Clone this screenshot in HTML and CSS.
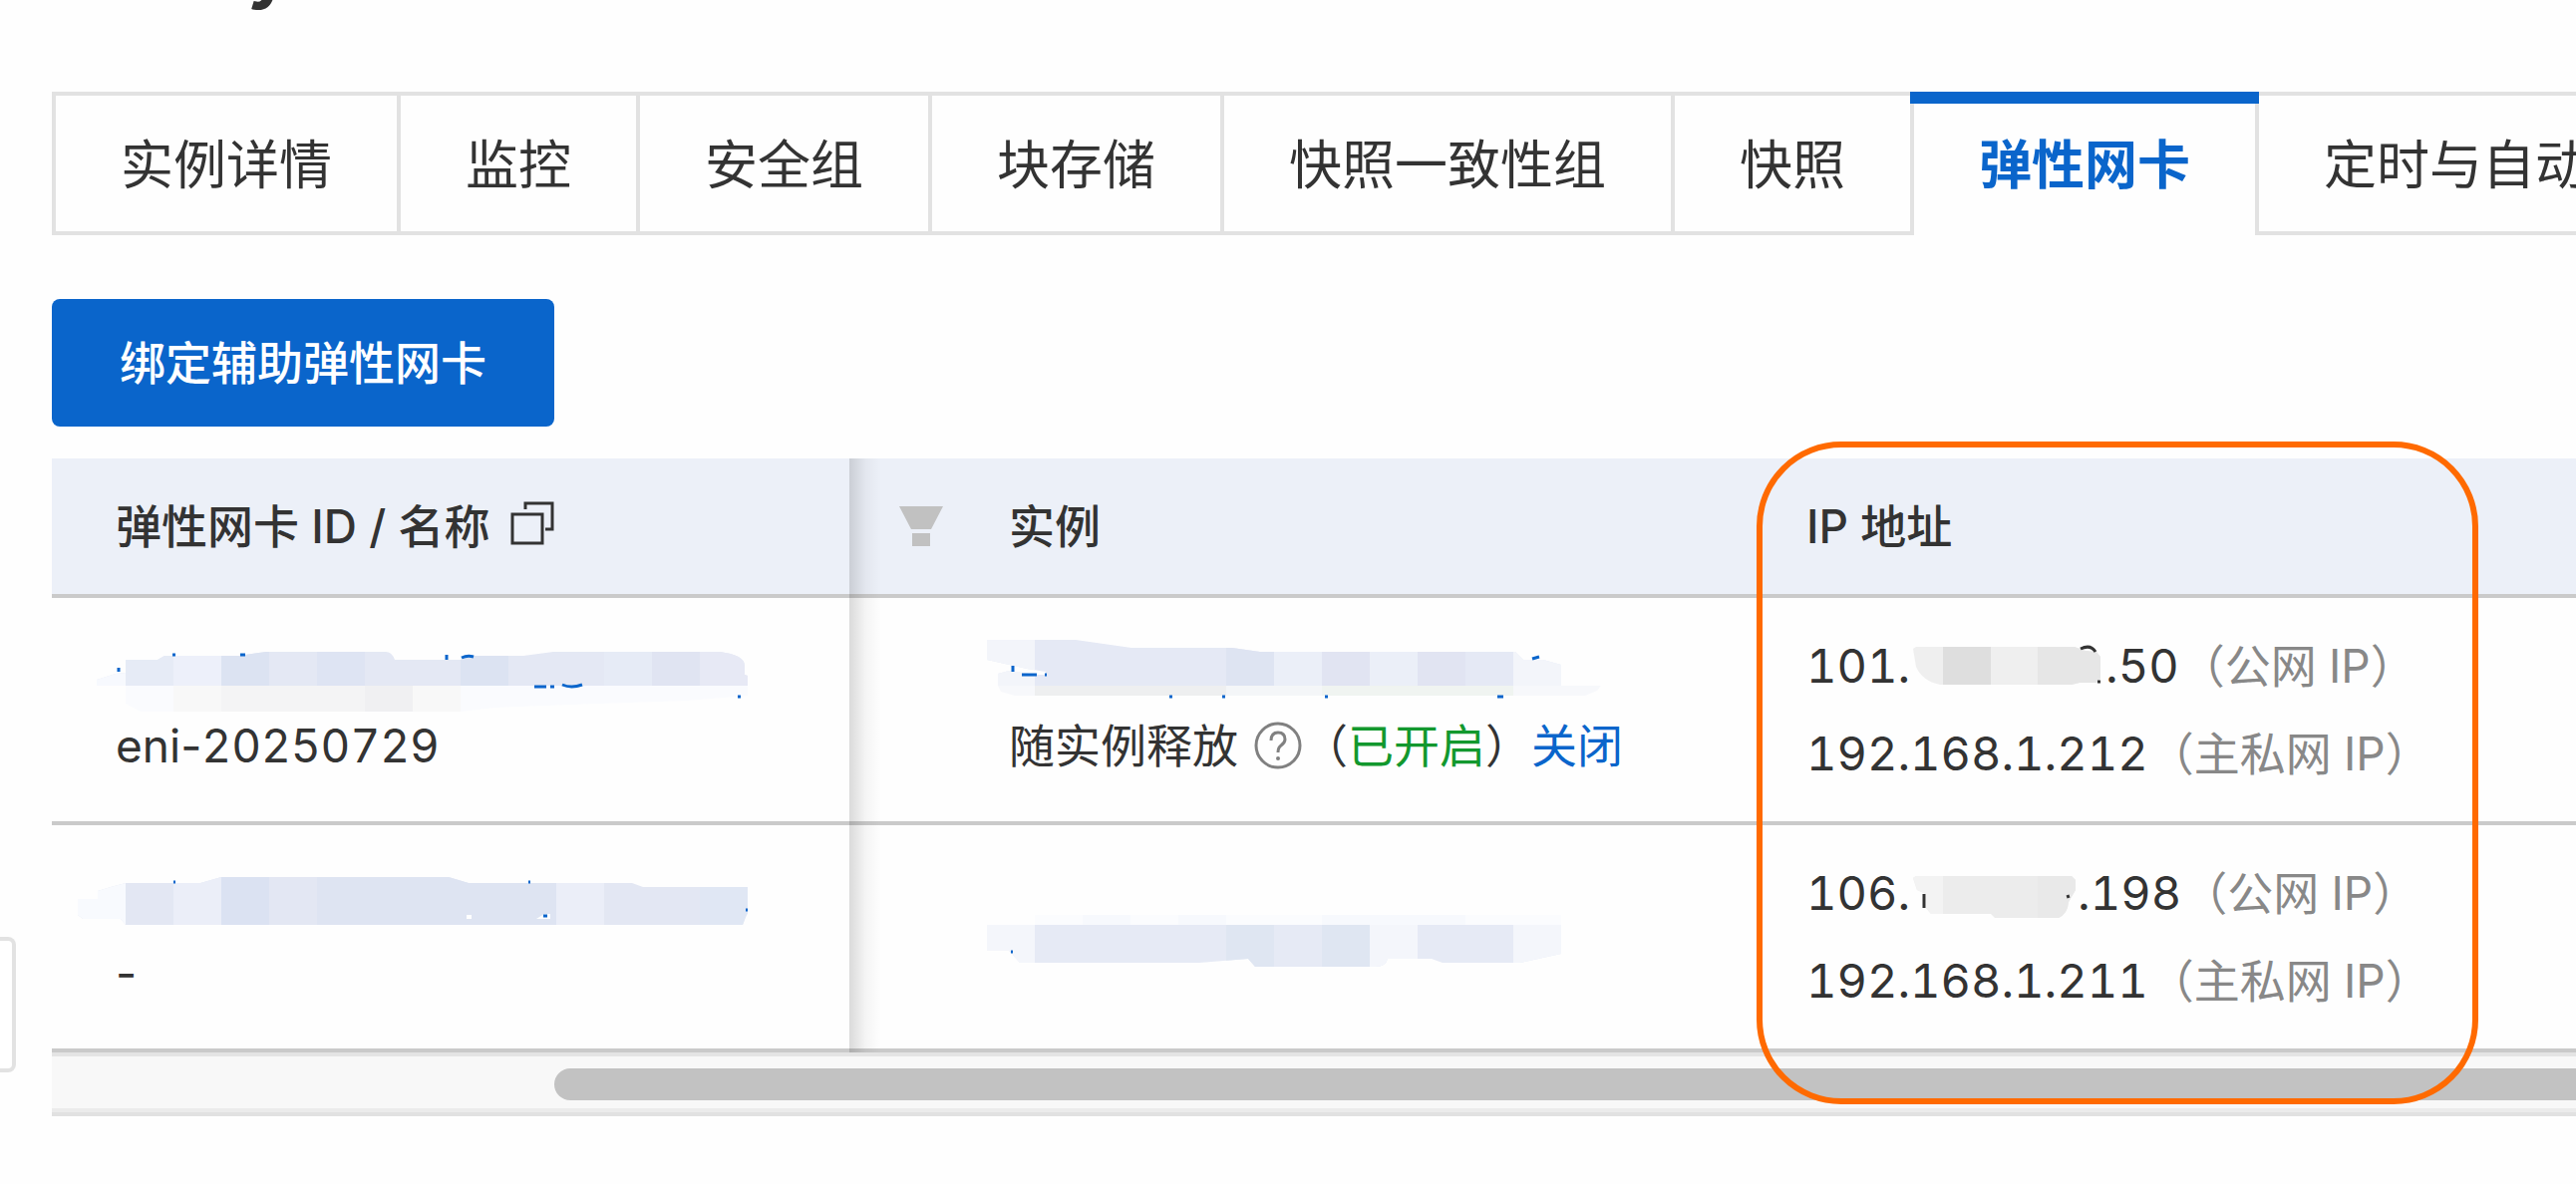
FILE: index.html
```html
<!DOCTYPE html>
<html lang="zh-CN">
<head>
  <meta charset="UTF-8">
  <title>弹性网卡</title>
  <link rel="stylesheet" href="styles.css">
</head>
<body>
  <button class="side-handle" aria-label="展开"></button>

  <header class="page-title">
    <h1>y</h1>
  </header>

  <nav class="tabs" role="tablist">
    <button class="tab" role="tab">实例详情</button>
    <button class="tab" role="tab">监控</button>
    <button class="tab" role="tab">安全组</button>
    <button class="tab" role="tab">块存储</button>
    <button class="tab" role="tab">快照一致性组</button>
    <button class="tab" role="tab">快照</button>
    <button class="tab active" role="tab" aria-selected="true">弹性网卡</button>
    <button class="tab" role="tab">定时与自动</button>
  </nav>

  <main class="content">
    <button class="btn-primary">绑定辅助弹性网卡</button>

    <div class="table-wrap">
      <table class="eni-table">
        <colgroup>
          <col class="col-id">
          <col class="col-filter">
          <col class="col-instance">
          <col class="col-ip">
        </colgroup>
        <thead>
          <tr>
            <th class="fixed">
              <div class="th-inner">
                <span>弹性网卡 ID / 名称</span>
                <svg class="icon-copy" viewBox="0 0 44 44" aria-hidden="true">
                  <path d="M2 13H32V42H2Z M15 8V2H42V28H35" />
                </svg>
              </div>
            </th>
            <th class="filter">
              <svg class="icon-filter" viewBox="0 0 44 40" aria-hidden="true">
                <path d="M0 0H44L32 23H12Z M13 27H31V40H13Z" />
              </svg>
            </th>
            <th>实例</th>
            <th>IP 地址</th>
          </tr>
        </thead>
        <tbody>
          <tr>
            <td class="fixed">
              <svg class="masked" viewBox="0 0 640 72" aria-hidden="true">
                <clipPath id="m1"><path d="M-19 48V42L0 36L10 35V22H42L49 18H123L151 14H271Q277 14 280 22H346L359 18H409L439 14H606Q631 17 631 28V37L634 38V48Z" /></clipPath>
                <clipPath id="m2"><path d="M10 48H634V58L573 63L485 66L381 70L346 74H25L10 66Z" /></clipPath>
                <g clip-path="url(#m1)">
                  <path fill="#e4e8f4" d="M-20 0H640V50H-20Z" />
                  <path fill="#f7f9fe" d="M-20 0H10V50H-20Z" />
                  <path fill="#e6ebf6" d="M10 0H58V50H10Z M490 0H538V50H490Z" />
                  <path fill="#edf0fa" d="M58 0H106V50H58Z" />
                  <path fill="#dce3f2" d="M106 0H154V50H106Z M346 0H394V50H346Z" />
                  <path fill="#dee4f3" d="M202 0H250V50H202Z" />
                  <path fill="#e0e4f2" d="M538 0H586V50H538Z" />
                  <path fill="#e7e9f5" d="M586 0H640V50H586Z" />
                </g>
                <g clip-path="url(#m2)">
                  <path fill="#fafbfe" d="M10 48H640V76H10Z" />
                  <path fill="#f8f8f8" d="M58 48H106V76H58Z M298 48H346V76H298Z" />
                  <path fill="#f4f4f5" d="M106 48H250V76H106Z" />
                  <path fill="#f0f0f2" d="M250 48H298V76H250Z" />
                </g>
                <path class="ink" d="M3 34V30 M57 17H60 M125 17H130 M332 17V22 M347 20Q353 17 359 19 M420 49H432 M436 49H440 M448 47Q457 51 468 47 M624 59H627" />
              </svg>
              <div class="line">eni-<span class="num">20250729</span></div>
            </td>
            <td></td>
            <td>
              <svg class="masked" viewBox="0 0 640 72" aria-hidden="true">
                <clipPath id="m3"><path d="M-22 2H67L123 10H224L252 14H508L516 22H536L554 27V48H-11V36L0 33L26 37H37V34L18 31L-22 22Z" /></clipPath>
                <clipPath id="m4"><path d="M-11 48H594L590 53L578 58H6L-8 54Z" /></clipPath>
                <g clip-path="url(#m3)">
                  <path fill="#e5e9f5" d="M-22 0H560V50H-22Z" />
                  <path fill="#f3f5fa" d="M-22 0H26V50H-22Z M506 0H560V50H506Z" />
                  <path fill="#dee4f2" d="M218 0H266V50H218Z" />
                  <path fill="#ebeff8" d="M266 0H314V50H266Z M362 0H410V50H362Z" />
                  <path fill="#e1e4f2" d="M314 0H362V50H314Z M410 0H458V50H410Z" />
                </g>
                <g clip-path="url(#m4)">
                  <path fill="#f7f8fb" d="M-12 48H600V60H-12Z" />
                  <path fill="#eeeff0" d="M26 48H218V60H26Z" />
                  <path fill="#f4f6f8" d="M218 48H314V60H218Z" />
                  <path fill="#f0f4f1" d="M314 48H506V60H314Z" />
                </g>
                <path class="ink" d="M4 28V34 M13 37H28 M36 37H38 M161 59H164 M214 59H217 M317 59H320 M490 59H496 M525 21L532 19" />
              </svg>
              <div class="line release">
                <span>随实例释放</span>
                <svg class="icon-help" viewBox="0 0 48 48" aria-hidden="true">
                  <circle cx="24" cy="24" r="22" />
                  <path d="M17 19Q17 11 24 11Q31 11 31 18Q31 21 27 24Q24 26 24 31" />
                  <circle class="dot" cx="24" cy="37" r="2" />
                </svg>
                <span>（<span class="on">已开启</span>）<a href="#">关闭</a></span>
              </div>
            </td>
            <td>
              <div class="ip-line">101.<svg class="ip-mask" viewBox="4 0 196 48" aria-hidden="true">
                  <clipPath id="m5"><path d="M7 6L10 4H169L180 8L191 9L195 14V36L191 40H174L166 42H34Q16 38 10 24Z" /></clipPath>
                  <g clip-path="url(#m5)">
                    <path fill="#efefef" d="M0 0H200V48H0Z" />
                    <path fill="#dedede" d="M37 0H85V48H37Z" />
                    <path fill="#e6e6e6" d="M132 0H200V48H132Z" />
                  </g>
                  <path class="ink-dark" d="M175 6Q185 1 190 9 M192 39H195" />
                </svg>.50<span class="kind">（公网 IP）</span></div>
              <div class="ip-line">192.168.1.212<span class="kind">（主私网 IP）</span></div>
            </td>
          </tr>
          <tr>
            <td class="fixed">
              <svg class="masked" viewBox="0 0 640 72" aria-hidden="true">
                <clipPath id="m6"><path d="M-38 34H-18V26L-5 22L10 18H85L106 12H334L354 18H518L529 22H634V48L632 52L629 60H10L5 54H-33L-38 50Z" /></clipPath>
                <g clip-path="url(#m6)">
                  <path fill="#e3e7f3" d="M-40 0H640V60H-40Z" />
                  <path fill="#f8fafe" d="M-40 0H10V60H-40Z" />
                  <path fill="#ebeef8" d="M58 0H106V60H58Z M442 0H490V60H442Z" />
                  <path fill="#dbe2f2" d="M106 0H154V60H106Z" />
                  <path fill="#dee4f2" d="M202 0H442V60H202Z" />
                  <path fill="#e0e7f4" d="M586 0H640V60H586Z" />
                  <path fill="#fff" d="M422 54L430 49H436V54Z M352 50H357V54H352Z" />
                </g>
                <path class="ink" d="M58 17H60 M414 17H416 M429 51H433 M632 45H634" />
              </svg>
              <div class="line">-</div>
            </td>
            <td></td>
            <td>
              <svg class="masked" viewBox="0 0 640 72" aria-hidden="true">
                <clipPath id="m7"><path d="M-22 24H554V53L513 62H435L424 58H380Q378 66 368 66H247L240 58L191 62H11L0 50H-22Z" /></clipPath>
                <path fill="#fbfcfe" d="M26 14H554V24H26Z" />
                <path fill="#f7f9fd" d="M74 14H122V24H74Z M170 14H218V24H170Z M314 14H458V24H314Z" />
                <g clip-path="url(#m7)">
                  <path fill="#e6eaf5" d="M-22 20H560V70H-22Z" />
                  <path fill="#f4f6fb" d="M-22 20H26V70H-22Z M362 20H410V70H362Z M506 20H560V70H506Z" />
                  <path fill="#dfe6f2" d="M218 20H266V70H218Z M314 20H362V70H314Z" />
                </g>
                <path class="ink" d="M2 51H4" />
              </svg>
            </td>
            <td>
              <div class="ip-line">106.<svg class="ip-mask short" viewBox="4 0 168 48" aria-hidden="true">
                  <clipPath id="m8"><path d="M7 8L10 6H166L170 10V20L163 32Q162 44 153 48H89L85 44H25L20 38V24L11 20Z" /></clipPath>
                  <g clip-path="url(#m8)">
                    <path fill="#ececec" d="M0 0H172V48H0Z" />
                    <path fill="#f3f3f3" d="M0 0H37V48H0Z" />
                    <path fill="#e9e9e9" d="M132 0H172V48H132Z" />
                  </g>
                  <path class="ink-dark" d="M18 24V38 M162 25L163 28" />
                </svg>.198<span class="kind">（公网 IP）</span></div>
              <div class="ip-line">192.168.1.211<span class="kind">（主私网 IP）</span></div>
            </td>
          </tr>
        </tbody>
      </table>

      <div class="scroll-track">
        <div class="scroll-thumb"></div>
      </div>

      <div class="highlight"></div>
    </div>
  </main>
</body>
</html>
```
FILE: styles.css
```css
* {
  box-sizing: border-box;
}

body {
  margin: 0;
  background: #fefefe;
  color: #333;
  font-family: Inter, "Noto Sans CJK SC", sans-serif;
  font-size: 46px;
  overflow: hidden;
}

button {
  font-family: inherit;
  cursor: pointer;
}

a {
  color: #0a65cb;
  text-decoration: none;
}

/* title is scrolled out, only its bottom edge shows */
.page-title {
  display: flex;
  align-items: flex-end;
  height: 12px;
  padding-left: 248px;
  overflow: hidden;
}

.page-title h1 {
  margin: 0;
  font-size: 72px;
  line-height: 86px;
  font-weight: 700;
}

.side-handle {
  position: absolute;
  left: 0;
  top: 940px;
  width: 16px;
  height: 136px;
  padding: 0;
  background: #fff;
  border: 4px solid #e2e2e2;
  border-left: none;
  border-radius: 0 8px 8px 0;
}

.tabs {
  display: flex;
  margin: 80px 0 0 52px;
  overflow: hidden;
}

.tab {
  flex: none;
  height: 144px;
  padding: 0 65px 4px;
  background: transparent;
  border: 4px solid #e2e2e2;
  border-left: none;
  color: #333;
  font-size: 53px;
  white-space: nowrap;
}

.tab:first-child {
  border-left: 4px solid #e2e2e2;
}

.tab.active {
  position: relative;
  border-top: none;
  border-bottom: none;
  color: #0a65cb;
  font-weight: 700;
}

.tab.active::before {
  content: "";
  position: absolute;
  top: 0;
  left: -4px;
  right: -4px;
  height: 12px;
  background: #0a65cb;
}

.content {
  padding: 64px 0 0 52px;
}

.btn-primary {
  display: block;
  height: 128px;
  padding: 0 68px 6px;
  background: #0a65cb;
  border: none;
  border-radius: 8px;
  color: #fff;
  font-size: 46px;
  font-weight: 500;
}

.table-wrap {
  position: relative;
  margin-top: 32px;
}

.eni-table {
  width: 100%;
  table-layout: fixed;
  border-collapse: separate;
  border-spacing: 0;
}

.col-id {
  width: 800px;
}

.col-filter {
  width: 96px;
}

.col-instance {
  width: 800px;
}

th {
  height: 140px;
  padding: 0 64px 6px;
  background: #ecf0f8;
  border-bottom: 4px solid #cacaca;
  font-weight: 500;
  text-align: left;
  white-space: nowrap;
}

th.filter {
  padding: 0 0 0 50px;
}

td {
  height: 228px;
  padding: 0 64px;
  border-bottom: 4px solid #cacaca;
  white-space: nowrap;
}

/* shadow cast by the fixed first column */
.fixed {
  position: relative;
}

.fixed::after {
  content: "";
  position: absolute;
  top: 0;
  bottom: -4px;
  left: 100%;
  width: 32px;
  background: linear-gradient(to right, rgba(0, 0, 0, 0.14), rgba(0, 0, 0, 0.04) 50%, rgba(0, 0, 0, 0));
}

.th-inner {
  display: flex;
  align-items: center;
  gap: 20px;
}

.icon-copy {
  width: 44px;
  height: 44px;
  fill: none;
  stroke: #333;
  stroke-width: 3;
}

.icon-filter {
  display: block;
  width: 44px;
  height: 40px;
  fill: #c1c1c1;
}

.icon-help {
  width: 48px;
  height: 48px;
  fill: none;
  stroke: #808080;
  stroke-width: 3;
}

.icon-help .dot {
  fill: #808080;
  stroke: none;
}

.line {
  line-height: 72px;
}

.num {
  font-variant-numeric: tabular-nums;
}

.release {
  display: flex;
  align-items: center;
}

.release .icon-help {
  margin: 0 0 0 16px;
}

.on {
  color: #12982e;
}

.masked {
  display: block;
  width: 640px;
  height: 72px;
  overflow: visible;
}

.ink,
.ink-dark {
  fill: none;
  stroke: #0a65cb;
  stroke-width: 3;
}

.ink-dark {
  stroke: #333;
}

.ip-line {
  line-height: 88px;
  font-size: 47px;
  font-variant-numeric: tabular-nums;
}

.ip-mask {
  width: 196px;
  height: 48px;
  vertical-align: -8px;
}

.ip-mask.short {
  width: 168px;
}

.kind {
  color: #888;
  font-size: 46px;
}

.scroll-track {
  height: 64px;
  padding: 12px 0 0 504px;
  background: #f8f8f8;
  border-top: 4px solid #e4e4e4;
  border-bottom: 4px solid #e1e1e1;
  box-shadow: inset 0 -4px #ebebeb;
}

.scroll-thumb {
  height: 32px;
  background: #c2c2c2;
  border-radius: 16px 0 0 16px;
}

/* marker frame round the IP column */
.highlight {
  position: absolute;
  top: -17px;
  bottom: 12px;
  left: 1710px;
  width: 724px;
  border: 6px solid #ff6a00;
  border-radius: 85px;
  pointer-events: none;
}
```
